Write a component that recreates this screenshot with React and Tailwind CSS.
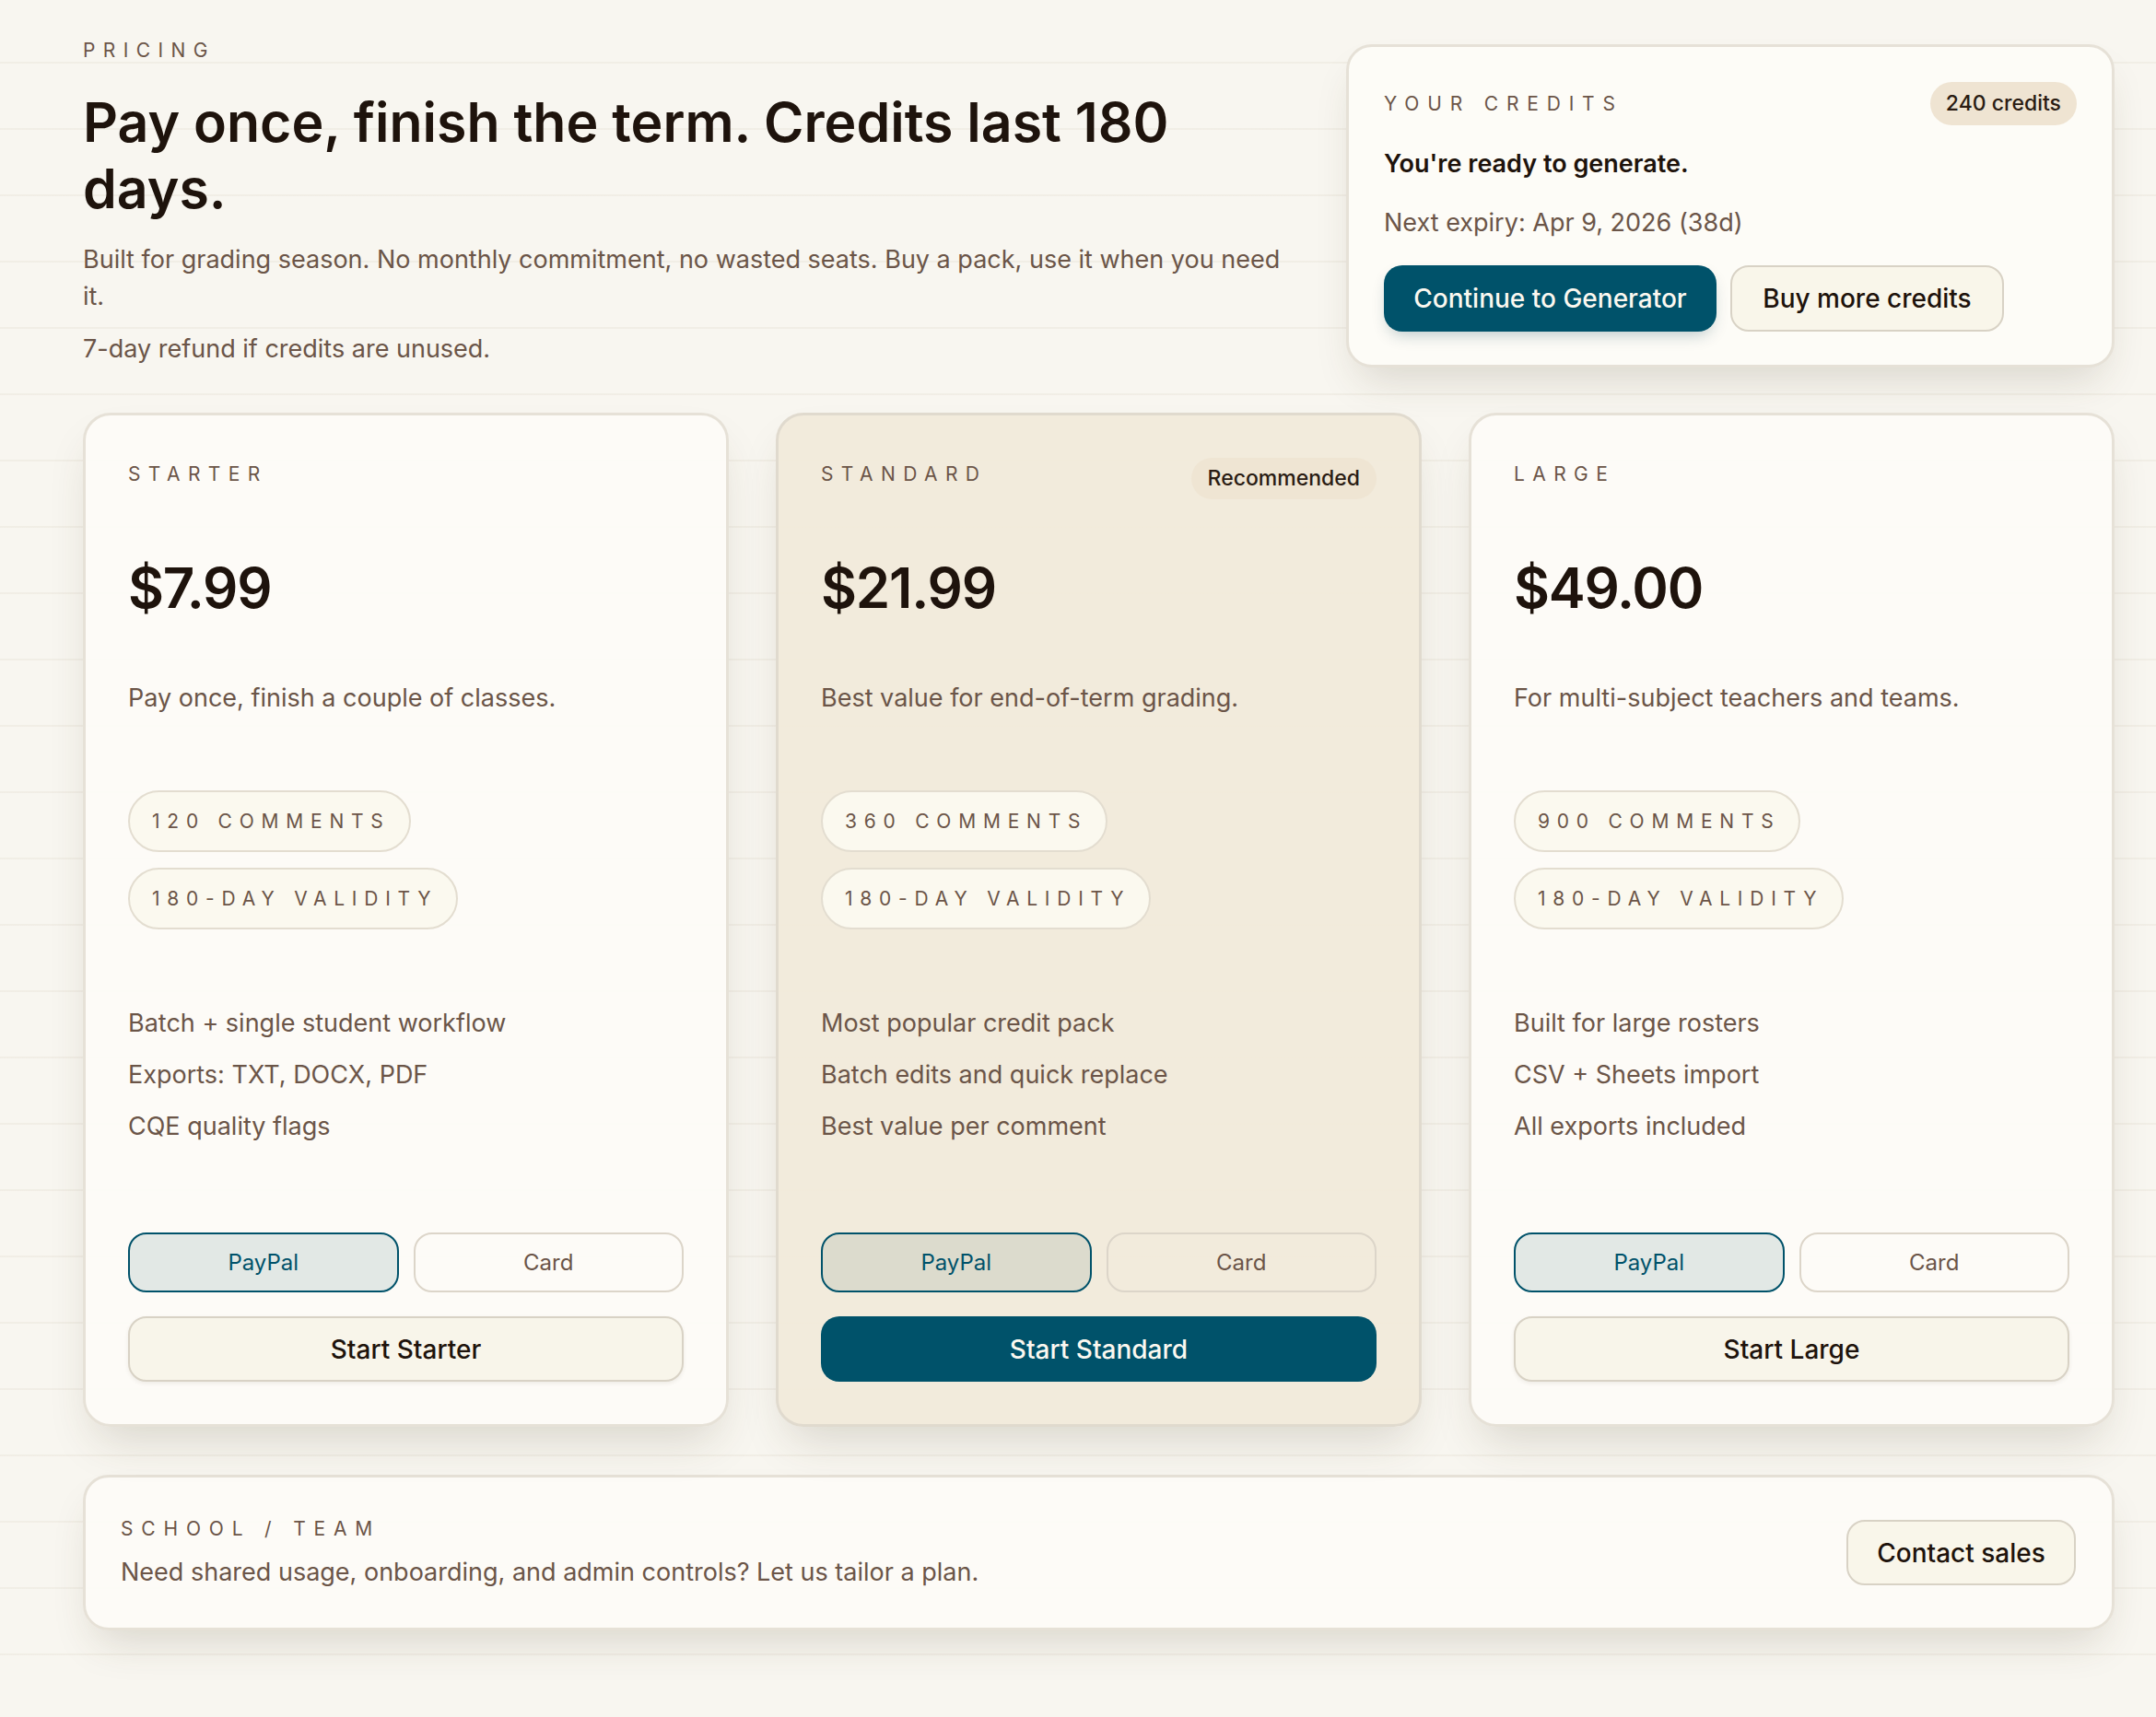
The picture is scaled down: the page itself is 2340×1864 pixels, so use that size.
import React from 'react'

const plans = [
  {
    name: 'STARTER',
    price: '$7.99',
    blurb: 'Pay once, finish a couple of classes.',
    comments: '120 COMMENTS',
    features: ['Batch + single student workflow', 'Exports: TXT, DOCX, PDF', 'CQE quality flags'],
    cta: 'Start Starter',
  },
  {
    name: 'STANDARD',
    price: '$21.99',
    blurb: 'Best value for end-of-term grading.',
    comments: '360 COMMENTS',
    features: ['Most popular credit pack', 'Batch edits and quick replace', 'Best value per comment'],
    cta: 'Start Standard',
    featured: true,
  },
  {
    name: 'LARGE',
    price: '$49.00',
    blurb: 'For multi-subject teachers and teams.',
    comments: '900 COMMENTS',
    features: ['Built for large rosters', 'CSV + Sheets import', 'All exports included'],
    cta: 'Start Large',
  },
]

function Chip({ children }) {
  return (
    <span className="inline-flex h-[67px] items-center rounded-full border-2 border-[#e3ddd0] bg-[#fbf9ef] pl-[24px] pr-[20px] text-[21px] tracking-[0.37em] text-[#6b5548]">
      {children}
    </span>
  )
}

function PlanCard({ plan }) {
  const featured = plan.featured
  return (
    <div
      className={`flex h-[1101px] flex-col rounded-[30px] border-[3px] px-[46px] pt-[46px] pb-[46px] shadow-[0_26px_50px_-14px_rgba(70,60,35,0.18)] ${
        featured ? 'border-[#e0dace] bg-[#f1eada]/95' : 'border-[#e6e1d7] bg-[#fdfcf7]/90'
      }`}
    >
      <div className="flex h-[38px] items-start justify-between">
        <p className="pt-[2px] text-[21px] tracking-[0.4em] text-[#6b5548]">{plan.name}</p>
        {featured && (
          <span className="rounded-full bg-[#efe5d3] px-[18px] py-[5px] text-[23px] font-medium text-[#2a1c13]">Recommended</span>
        )}
      </div>
      <p className="mt-[68px] text-[60px] font-semibold leading-[70px] tracking-[-0.02em] text-[#1e130c]">{plan.price}</p>
      <p className="mt-[67px] text-[27px] leading-[36px] text-[#6b5548]">{plan.blurb}</p>
      <div className="mt-[82px] flex flex-col items-start gap-[17px]">
        <Chip>{plan.comments}</Chip>
        <Chip>180-DAY VALIDITY</Chip>
      </div>
      <div className="mt-[84px] flex flex-col gap-[20px]">
        {plan.features.map((f) => (
          <p key={f} className="text-[27px] leading-[36px] text-[#6b5548]">{f}</p>
        ))}
      </div>
      <div className="mt-auto grid grid-cols-2 gap-[16px]">
        <button
          className={`h-[65px] rounded-[20px] border-2 border-[#00526a] text-[24px] text-[#00526a] ${
            featured ? 'bg-[#dcdbcd]' : 'bg-[#e2e8e5]'
          }`}
        >
          PayPal
        </button>
        <button className="h-[65px] rounded-[20px] border-2 border-[#dcd5c9] text-[24px] text-[#6b5548]">Card</button>
      </div>
      <button
        className={`mt-[26px] h-[71px] w-full rounded-[20px] text-[28px] font-medium ${
          featured
            ? 'bg-[#00526a] text-[#fbf8f0]'
            : 'border-2 border-[#d8d2c5] bg-[#f8f5ea] text-[#1e130c] shadow-[0_2px_4px_rgba(60,50,30,0.08)]'
        }`}
      >
        {plan.cta}
      </button>
    </div>
  )
}

export default function App() {
  return (
    <div
      className="min-h-[1864px] w-full bg-[#f8f6f0] bg-[repeating-linear-gradient(to_bottom,transparent_0px,transparent_67px,rgba(150,130,90,0.07)_67px,rgba(150,130,90,0.07)_69px,transparent_69px,transparent_72px)]"
      style={{ fontFamily: 'Inter, "Noto Sans", sans-serif' }}
    >
      <div className="ml-[90px] w-[2205px]">
        {/* header */}
        <div className="flex items-start justify-between">
          <div className="w-[1315px] pt-[42px]">
            <p className="text-[21px] leading-[26px] tracking-[0.4em] text-[#6b5548]">PRICING</p>
            <h1 className="mt-[29px] max-w-[1250px] text-[59px] font-semibold leading-[72px] text-[#1e130c]">
              Pay once, finish the term. Credits last 180 days.
            </h1>
            <p className="mt-[21px] text-[27px] leading-[40px] text-[#6b5548]">
              Built for grading season. No monthly commitment, no wasted seats. Buy a pack, use it when you need it.
            </p>
            <p className="mt-[17px] text-[27px] leading-[40px] text-[#6b5548]">7-day refund if credits are unused.</p>
          </div>
          <div className="mt-[48px] w-[834px] rounded-[28px] border-[3px] border-[#e6e1d7] bg-[#fdfcf7] px-[38px] pt-[38px] pb-[36px] shadow-[0_24px_46px_-14px_rgba(70,60,35,0.18)]">
            <div className="flex items-center justify-between">
              <p className="text-[21px] tracking-[0.42em] text-[#6b5548]">YOUR CREDITS</p>
              <span className="rounded-full bg-[#efe4d2] px-[17px] py-[6px] text-[23px] font-medium text-[#2a1c13]">240 credits</span>
            </div>
            <p className="mt-[22px] text-[27px] font-semibold text-[#1e130c]">You're ready to generate.</p>
            <p className="mt-[24px] text-[27px] text-[#6b5548]">Next expiry: Apr 9, 2026 (38d)</p>
            <div className="mt-[25px] flex gap-[15px]">
              <button className="h-[72px] w-[361px] rounded-[20px] bg-[#00526a] text-[28px] font-medium text-[#fbf8f0] shadow-[0_8px_18px_-6px_rgba(0,60,80,0.3)]">
                Continue to Generator
              </button>
              <button className="h-[72px] w-[297px] rounded-[20px] border-2 border-[#d8d2c5] bg-[#f9f6ea] text-[28px] font-medium text-[#1e130c]">
                Buy more credits
              </button>
            </div>
          </div>
        </div>

        {/* plans */}
        <div className="mt-[49px] grid grid-cols-3 gap-[51px]">
          {plans.map((p) => (
            <PlanCard key={p.name} plan={p} />
          ))}
        </div>

        {/* school / team */}
        <div className="mt-[52px] flex h-[169px] items-center justify-between rounded-[28px] border-[3px] border-[#e6e1d7] bg-[#fdfcf7]/90 pl-[38px] pr-[39px] shadow-[0_24px_46px_-14px_rgba(70,60,35,0.18)]">
          <div>
            <p className="text-[21px] tracking-[0.42em] text-[#6b5548]">SCHOOL / TEAM</p>
            <p className="mt-[12px] text-[27px] text-[#6b5548]">Need shared usage, onboarding, and admin controls? Let us tailor a plan.</p>
          </div>
          <button className="h-[71px] w-[249px] rounded-[20px] border-2 border-[#d8d2c5] bg-[#f9f6ea] text-[28px] font-medium text-[#1e130c]">
            Contact sales
          </button>
        </div>
      </div>
    </div>
  )
}
